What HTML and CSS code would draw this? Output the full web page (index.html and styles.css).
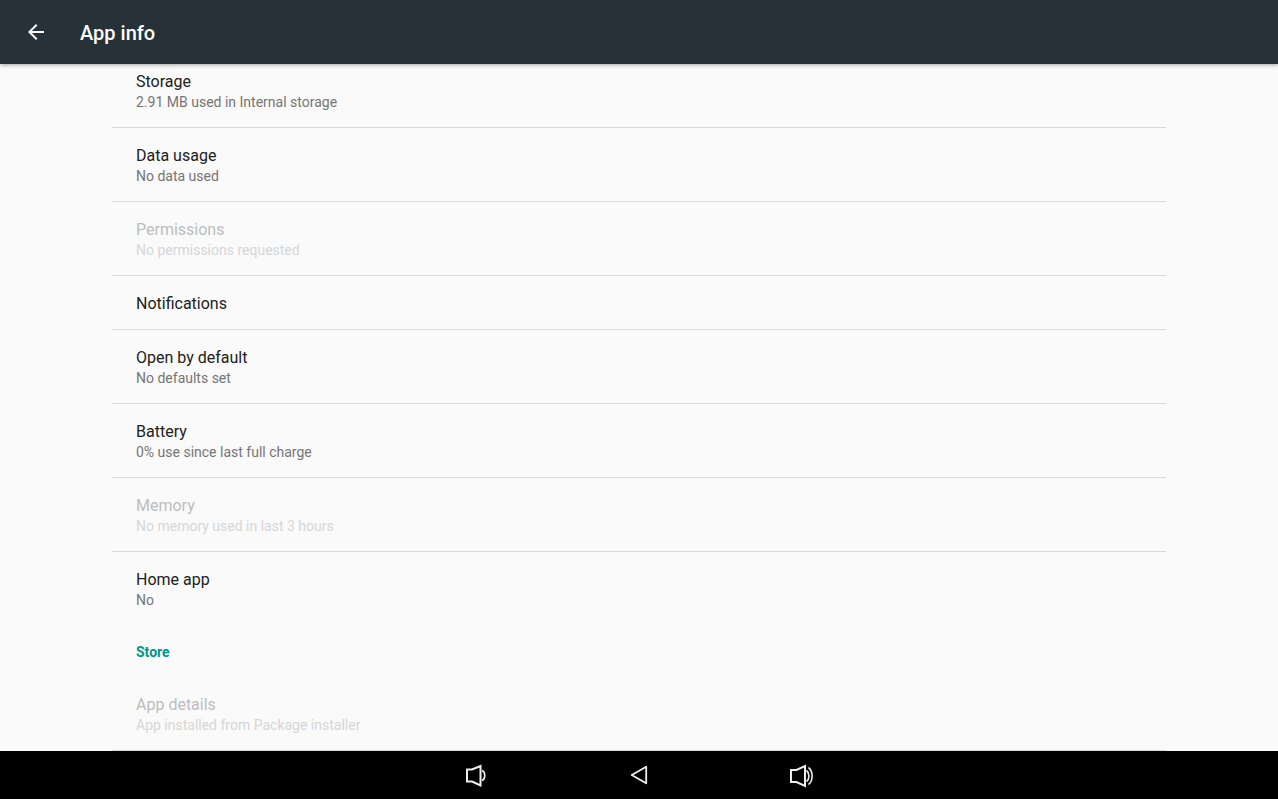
FILE: index.html
```
<!DOCTYPE html>
<html lang="en">
<head>
<meta charset="utf-8">
<meta name="viewport" content="width=device-width, initial-scale=1">
<title>App info</title>
<link rel="stylesheet" href="styles.css">
</head>
<body>
<header class="app-bar">
  <button class="icon-button" type="button" aria-label="Navigate up">
    <svg width="24" height="24" viewBox="0 0 24 24" fill="currentColor"><path d="M20 11H7.83l5.59-5.59L12 4l-8 8 8 8 1.41-1.41L7.83 13H20v-2z"/></svg>
  </button>
  <h1 class="app-title">App info</h1>
</header>
<main class="content">
  <div class="list">
    <button class="row" type="button"><span class="row-title">Storage</span><span class="row-summary">2.91 MB used in Internal storage</span></button>
    <button class="row" type="button"><span class="row-title">Data usage</span><span class="row-summary">No data used</span></button>
    <button class="row" type="button" disabled><span class="row-title">Permissions</span><span class="row-summary">No permissions requested</span></button>
    <button class="row row-single" type="button"><span class="row-title">Notifications</span></button>
    <button class="row" type="button"><span class="row-title">Open by default</span><span class="row-summary">No defaults set</span></button>
    <button class="row" type="button"><span class="row-title">Battery</span><span class="row-summary">0% use since last full charge</span></button>
    <button class="row" type="button" disabled><span class="row-title">Memory</span><span class="row-summary">No memory used in last 3 hours</span></button>
    <button class="row row-last" type="button"><span class="row-title">Home app</span><span class="row-summary">No</span></button>
    <h2 class="category">Store</h2>
    <button class="row" type="button" disabled><span class="row-title">App details</span><span class="row-summary">App installed from Package installer</span></button>
  </div>
</main>
<nav class="nav-bar" aria-label="System navigation">
  <button class="nav-button" type="button" aria-label="Volume down">
    <svg width="28" height="28" viewBox="0 0 28 28" fill="none" stroke="currentColor" stroke-width="2"><path d="M6 8.500H11L19.500 5V24.500L11 20.500H6Z"/><path d="M21 9.500C24.700 11 24.700 18 21 19.500" stroke-width="1.600"/></svg>
  </button>
  <button class="nav-button" type="button" aria-label="Back">
    <svg width="28" height="28" viewBox="0 0 28 28" fill="none" stroke="currentColor" stroke-width="1.800" stroke-linejoin="round"><path d="M21.200 5.700V22.300L6.700 14Z"/></svg>
  </button>
  <button class="nav-button" type="button" aria-label="Volume up">
    <svg width="28" height="28" viewBox="0 0 28 28" fill="none" stroke="currentColor" stroke-width="2"><path d="M2 9H7.500L16 5V25L7.500 21H2Z"/><path d="M17.500 9.500C20.800 12 20.800 18 17.500 20.500M19.500 6.500C24.300 10 24.300 20 19.500 23.500" stroke-width="1.600"/></svg>
  </button>
</nav>
</body>
</html>
```
FILE: styles.css
```
* {
  box-sizing: border-box;
}

body {
  display: flex;
  flex-direction: column;
  height: 100vh;
  margin: 0;
  background: #fafafa;
  color: #212121;
  font-family: Roboto, "Noto Sans", sans-serif;
}

button {
  margin: 0;
  border: 0;
  background: none;
  color: inherit;
  font: inherit;
}

svg {
  display: block;
}

.app-bar {
  display: flex;
  flex: none;
  align-items: center;
  gap: 20px;
  height: 64px;
  padding: 0 12px;
  background: #263238;
  box-shadow: 0 1px 4px rgba(0, 0, 0, 0.35);
  color: #fff;
  z-index: 1;
}

.icon-button {
  padding: 12px;
}

.app-title {
  margin: 0;
  padding-top: 2px;
  font-size: 20px;
  font-weight: 500;
  line-height: 24px;
}

.content {
  flex: 1;
  min-height: 0;
  overflow: hidden;
  padding: 0 112px;
}

/* The list is scrolled slightly under the app bar. */
.list {
  margin-top: -10px;
}

.row {
  display: flex;
  flex-direction: column;
  width: 100%;
  padding: 17px 24px 15px;
  border-bottom: 1px solid #d9d9d9;
  text-align: left;
}

.row-title {
  font-size: 16px;
  line-height: 22px;
}

.row-summary {
  color: #757575;
  font-size: 14px;
  line-height: 19px;
}

.row:disabled .row-title {
  color: #bdbdbd;
}

.row:disabled .row-summary {
  color: #d6d6d6;
}

.row-single {
  padding-bottom: 14px;
}

.row-last {
  border-bottom: 0;
}

.category {
  margin: 0;
  padding: 17px 24px 15px;
  color: #009688;
  font-size: 14px;
  font-weight: 700;
  line-height: 20px;
}

.nav-bar {
  display: flex;
  flex: none;
  align-items: center;
  justify-content: center;
  gap: 108px;
  height: 48px;
  background: #000;
  color: #eee;
}

.nav-button {
  padding: 10px 14px;
}
```
